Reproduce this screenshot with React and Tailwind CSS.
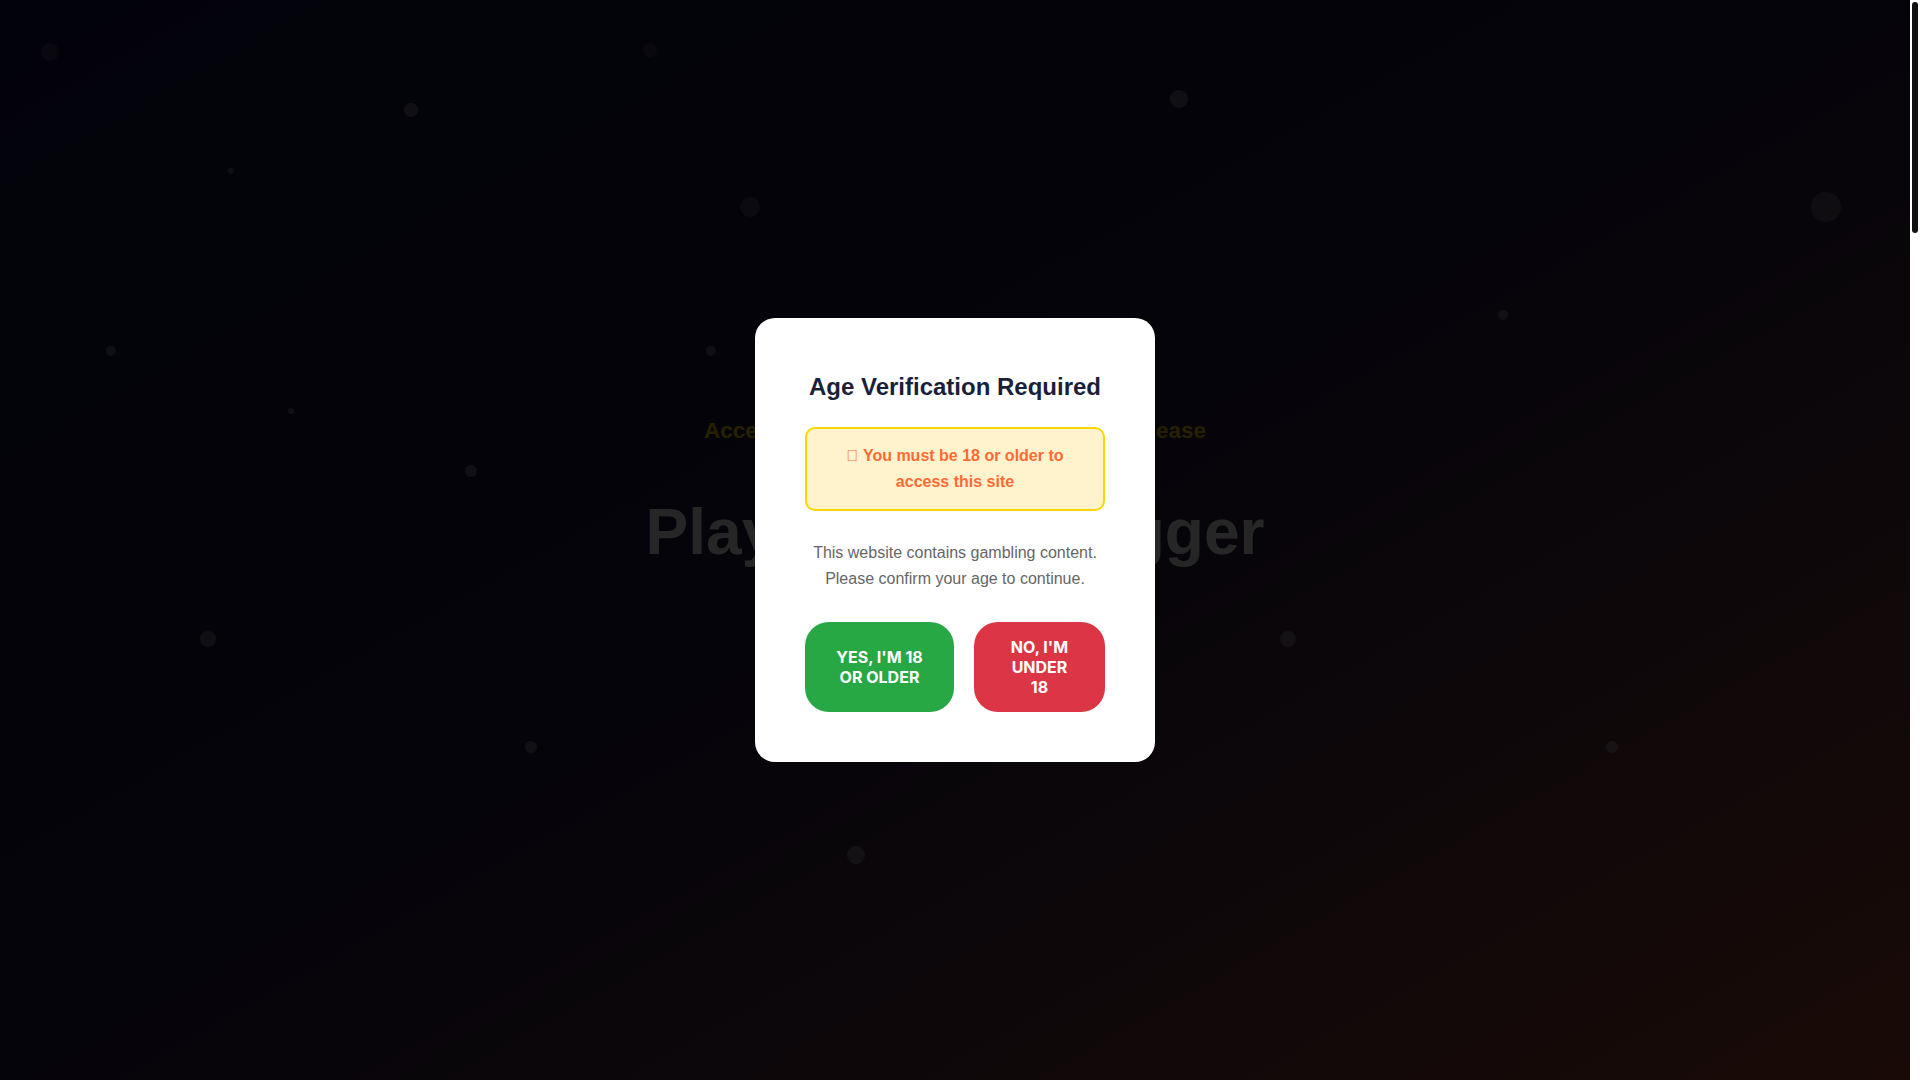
import React, { useState } from 'react';

const particles = [
  { x: 50, y: 52, s: 18, o: 'bg-white/15' },
  { x: 411, y: 110, s: 14, o: 'bg-white/35' },
  { x: 650, y: 50, s: 14, o: 'bg-white/15' },
  { x: 231, y: 171, s: 6, o: 'bg-white/35' },
  { x: 750, y: 207, s: 20, o: 'bg-white/20' },
  { x: 111, y: 351, s: 10, o: 'bg-white/35' },
  { x: 291, y: 411, s: 6, o: 'bg-white/35' },
  { x: 711, y: 351, s: 10, o: 'bg-white/35' },
  { x: 471, y: 471, s: 12, o: 'bg-white/35' },
  { x: 1179, y: 99, s: 18, o: 'bg-white/35' },
  { x: 1826, y: 207, s: 30, o: 'bg-white/25' },
  { x: 1503, y: 315, s: 10, o: 'bg-white/35' },
  { x: 208, y: 639, s: 16, o: 'bg-white/35' },
  { x: 531, y: 747, s: 12, o: 'bg-white/35' },
  { x: 856, y: 855, s: 18, o: 'bg-white/35' },
  { x: 1288, y: 639, s: 16, o: 'bg-white/35' },
  { x: 1612, y: 747, s: 12, o: 'bg-white/35' },
];

const AgeGate = ({ onConfirm, onDeny }) => (
  <div className="absolute inset-0 z-50 flex items-center justify-center bg-black/85">
    <div className="w-[400px] rounded-[20px] bg-white px-[50px] pt-[54px] pb-[50px] text-center">
      <h2 className="mb-[26px] text-[24px] leading-[29px] font-bold text-[#1a1f3a]">
        Age Verification Required
      </h2>

      <div className="rounded-[10px] border-2 border-[#ffd700] bg-[#fff3cd] px-[15px] py-[14px] text-[16px] leading-[26px] font-bold text-[#ff6b35]">
        {'\uf071'} You must be 18 or older to access this site
      </div>

      <p className="mt-[29px] text-[16px] leading-[26px] text-[#666]">
        This website contains gambling content. Please confirm your age to continue.
      </p>

      <div className="mt-[30px] flex gap-5">
        <button
          onClick={onConfirm}
          className="flex w-[149px] shrink-0 items-center justify-center rounded-[24px] bg-[#28a745] px-[30px] py-[15px] font-['Inter',sans-serif] text-[16px] leading-5 font-bold uppercase text-white"
        >
          Yes, I'm 18 or older
        </button>
        <button
          onClick={onDeny}
          className="flex w-[131px] shrink-0 items-center justify-center rounded-[24px] bg-[#dc3545] px-[30px] py-[15px] font-['Inter',sans-serif] text-[16px] leading-5 font-bold uppercase text-white"
        >
          No, I'm under 18
        </button>
      </div>
    </div>
  </div>
);

const App = () => {
  const [verified, setVerified] = useState(false);

  return (
    <div className="flex h-screen font-['Liberation_Sans',Arial,sans-serif] text-white">
      <main className="relative flex-1 overflow-y-auto [&::-webkit-scrollbar]:hidden">
        {/* hero */}
        <section className="relative h-screen overflow-hidden bg-gradient-to-br from-[#121244] via-[#261c46] to-[#a8472d]">
          {particles.map((p, i) => (
            <span
              key={i}
              className={`absolute rounded-full ${p.o}`}
              style={{ left: p.x - p.s / 2, top: p.y - p.s / 2, width: p.s, height: p.s }}
            />
          ))}

          <div className="relative flex flex-col items-center pt-[414px] text-center">
            <p className="mb-[46px] text-[22.4px] leading-[1.5] font-bold text-[#ffd700]">
              Access is restricted to players 18+ only. Please
            </p>
            <h1 className="text-[64px] leading-[1.2] font-bold">Play Chicken Digger</h1>
          </div>
        </section>

        <section className="flex h-[1000px] flex-col items-center bg-[#0b0b1e] pt-24">
          <h2 className="text-4xl font-bold text-[#ffd700]">How to Play</h2>
        </section>
        <section className="flex h-[1000px] flex-col items-center bg-[#10102a] pt-24">
          <h2 className="text-4xl font-bold text-[#ffd700]">Game Features</h2>
        </section>
        <section className="flex h-[1000px] flex-col items-center bg-[#0b0b1e] pt-24">
          <h2 className="text-4xl font-bold text-[#ffd700]">Frequently Asked Questions</h2>
        </section>
        <footer className="h-[880px] bg-[#06060f] pt-16 text-center text-sm text-gray-400">
          © 2024 Play responsibly. 18+ only.
        </footer>

        {!verified && <AgeGate onConfirm={() => setVerified(true)} onDeny={() => {}} />}
      </main>

      {/* scroll rail */}
      <div className="w-[10px] shrink-0 bg-white p-[2px]">
        <div className="h-[231px] rounded-[3px] bg-[#111]" />
      </div>
    </div>
  );
};

export default App;
